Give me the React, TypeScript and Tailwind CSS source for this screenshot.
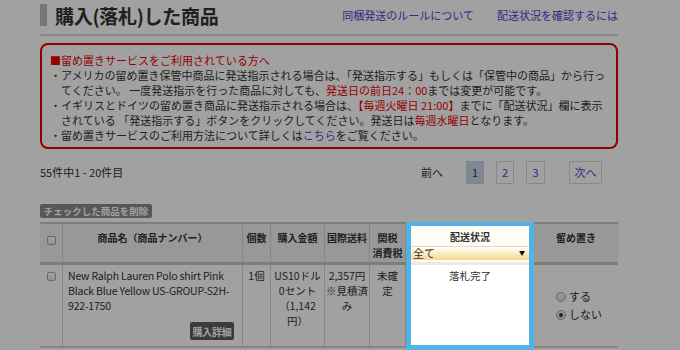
import React from "react";

const jp = "font-['Noto_Sans_CJK_JP',sans-serif]";

function Check() {
  return (
    <span className="inline-block h-[9px] w-[9px] rounded-[2px] border border-[#a9a9a9] bg-gradient-to-b from-white to-[#e6e6e6]" />
  );
}

function Radio({ on }: { on?: boolean }) {
  return (
    <span className="flex h-[10px] w-[10px] items-center justify-center rounded-full border border-[#a0a0a0] bg-gradient-to-b from-[#f4f4f4] to-[#dcdcdc]">
      {on && <span className="h-[4px] w-[4px] rounded-full bg-[#333]" />}
    </span>
  );
}

// one table column: header cell, header band, body cell
function Col({
  w,
  head,
  children,
  className = "",
}: {
  w: string;
  head: React.ReactNode;
  children?: React.ReactNode;
  className?: string;
}) {
  return (
    <div className={`flex flex-col border-t-2 border-[#c9c5b9] ${w}`}>
      <div className={`h-[38px] border-r border-[#d9d5ca] bg-[#f1f1f1] pt-[6px] text-center text-[10px] font-bold leading-[15px] ${className}`}>
        {head}
      </div>
      <div className="h-[3px] bg-[#cbc6b8]" />
      <div className={`h-[81px] border-r border-[#d9d5ca] pt-[3px] text-[10.5px] leading-[15px] ${className}`}>
        {children}
      </div>
      <div className="h-[2px] bg-[#d9d5ca]" />
    </div>
  );
}

export default function App() {
  return (
    <div className={`relative h-[350px] w-[680px] overflow-hidden bg-white text-[#333] ${jp}`}>
      <div className="ml-[40px] w-[578px]">
        {/* Title */}
        <div className="flex h-[36px] items-center border-b-2 border-[#d6d6d6] pb-[4px]">
          <div className="h-[22px] w-[7px] bg-[#bcbcbc]" />
          <h1 className="ml-[8px] text-[19px] font-bold leading-none tracking-[-0.3px]">購入(落札)した商品</h1>
          <div className="ml-auto flex gap-[23px] text-[11px] text-[#4848d0]">
            <span>同梱発送のルールについて</span>
            <span>配送状況を確認するには</span>
          </div>
        </div>

        {/* Notice */}
        <div className="mt-[7px] h-[106px] rounded-[8px] border-2 border-[#e60000] px-[8px] pt-[8px] text-[11px] leading-[15px]">
          <p className="text-[#ee0000]">■留め置きサービスをご利用されている方へ</p>
          <p>・アメリカの留め置き保管中商品に発送指示される場合は、「発送指示する」もしくは「保管中の商品」から行っ</p>
          <p className="pl-[11px]">
            てください。 一度発送指示を行った商品に対しても、<span className="text-[#ee0000]">発送日の前日24：00</span>までは変更が可能です。
          </p>
          <p>
            ・イギリスとドイツの留め置き商品に発送指示される場合は、<span className="text-[#ee0000]">【毎週火曜日 21:00】</span>までに「配送状況」欄に表示
          </p>
          <p className="pl-[11px]">
            されている 「発送指示する」ボタンをクリックしてください。発送日は<span className="text-[#ee0000]">毎週水曜日</span>となります。
          </p>
          <p>
            ・留め置きサービスのご利用方法について詳しくは<span className="text-[#4848d0]">こちら</span>をご覧ください。
          </p>
        </div>

        {/* Count + pager */}
        <div className="mt-[12px] flex h-[23px] items-center text-[11px]">
          <span>55件中1 - 20件目</span>
          <div className="ml-auto mr-[16px] flex items-center">
            <span className="mr-[23px]">前へ</span>
            <span className="flex h-[23px] w-[18px] items-center justify-center border border-[#cfcfcf] bg-[#c7d8ea]">1</span>
            <span className="ml-[12px] flex h-[23px] w-[18px] items-center justify-center border border-[#d8d8d8] text-[#4848d0]">2</span>
            <span className="ml-[12px] flex h-[23px] w-[19px] items-center justify-center border border-[#d8d8d8] text-[#4848d0]">3</span>
            <span className="ml-[24px] flex h-[23px] w-[33px] items-center justify-center border border-[#d8d8d8] text-[#4848d0]">次へ</span>
          </div>
        </div>

        <button className="mt-[20px] flex h-[14px] w-[112px] items-center justify-center rounded-[2px] bg-[#8a8a8a] text-[9.5px] font-bold text-white">
          チェックした商品を削除
        </button>

        {/* Table */}
        <div className="mt-[4px] flex">
          <Col w="w-[23px]" head={<div className="pt-[3px]"><Check /></div>}>
            <div className="flex justify-center pt-[4px]">
              <Check />
            </div>
          </Col>
          <Col w="w-[180px]" head="商品名（商品ナンバー）">
            <div className="flex h-full flex-col pl-[5px] pr-[8px] pb-[6px] text-left text-[10.5px] tracking-[-0.2px]">
              <span>
                New Ralph Lauren Polo shirt Pink
                <br />
                Black Blue Yellow US-GROUP-S2H-
                <br />
                922-1750
              </span>
              <span className="mt-auto flex h-[18px] w-[44px] items-center justify-center self-end rounded-[2px] bg-[#5e5e5e] text-[10px] font-bold text-white">
                購入詳細
              </span>
            </div>
          </Col>
          <Col w="w-[28px]" head="個数" className="text-center">
            1個
          </Col>
          <Col w="w-[54px]" head="購入金額" className="text-center">
            US10ドル
            <br />
            0セント
            <br />
            （1,142
            <br />
            円）
          </Col>
          <Col w="w-[45px]" head="国際送料" className="text-center">
            2,357円
            <br />
            ※見積済
            <br />
            み
          </Col>
          <Col
            w="w-[36px]"
            head={
              <>
                関税
                <br />
                消費税
              </>
            }
            className="text-center"
          >
            未確
            <br />
            定
          </Col>

          {/* highlighted column */}
          <div className="relative z-20 flex h-[128px] w-[128px] flex-col border-x-[5px] border-t-4 border-b-[5px] border-[#4fb3e4] bg-white">
            <div className="h-[36px] bg-[#fffdf6] pt-[3px] text-center text-[10px] font-bold leading-[15px]">
              配送状況
              <div className="mt-[2px] flex h-[14px] items-center justify-between border-y border-[#e9dcb4] bg-gradient-to-b from-white to-[#f6d98a] pl-[2px] pr-[4px] text-left text-[11px] font-normal leading-none">
                <span>全て</span>
                <span className="text-[6px] text-black">▼</span>
              </div>
            </div>
            <div className="h-[3px] bg-[#ede9de]" />
            <div className="pt-[3px] text-center text-[10.5px] leading-[15px]">落札完了</div>
          </div>

          <Col w="w-[84px]" head="留め置き" className="border-r-0">
            <div className="flex h-full flex-col justify-center gap-[3px] pl-[22px] pb-[3px] text-[11px]">
              <span className="flex items-center gap-[3px]">
                <Radio /> する
              </span>
              <span className="flex items-center gap-[3px]">
                <Radio on /> しない
              </span>
            </div>
          </Col>
        </div>
      </div>

      {/* dim overlay */}
      <div className="absolute inset-0 z-10 bg-black/[0.37]" />
    </div>
  );
}
